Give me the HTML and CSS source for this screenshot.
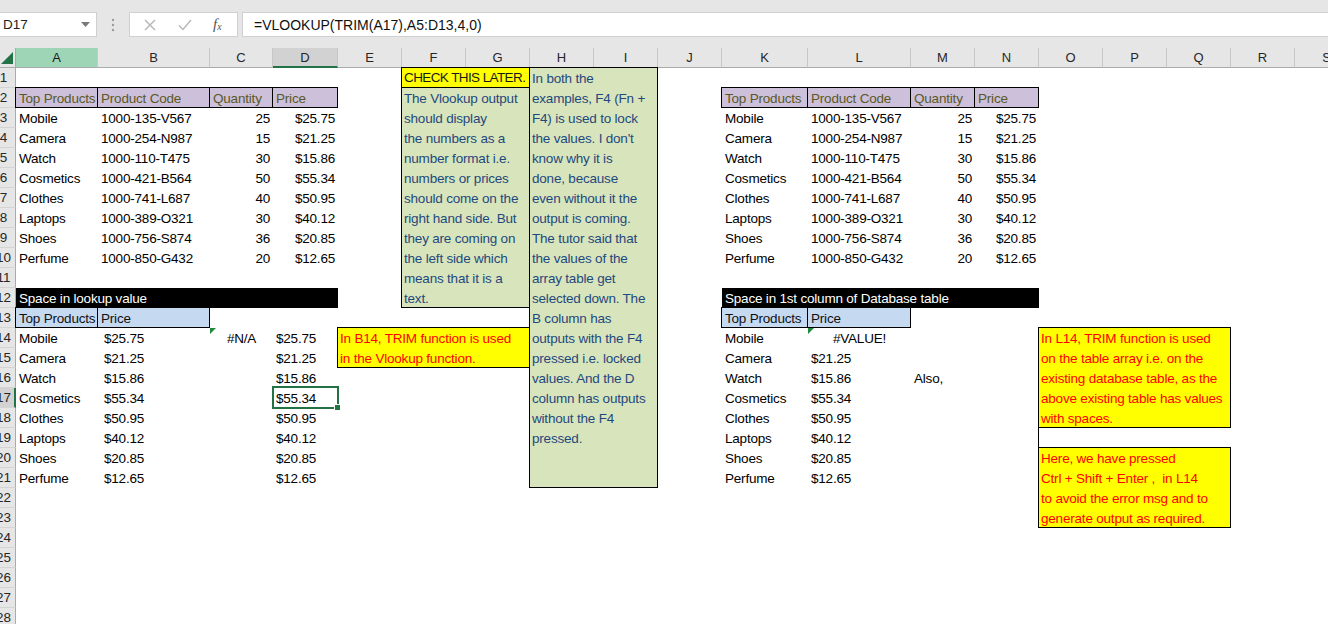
FILE: index.html
```html
<!DOCTYPE html>
<html>
<head>
<meta charset="utf-8">
<link rel="stylesheet" href="styles.css">
</head>
<body>
<div class="app">
  <div class="fbar">
    <div class="namebox">
      <span>D17</span>
      <svg class="dd" width="9" height="5" viewBox="0 0 9 5"><path d="M0 0H9L4.5 5Z" fill="#7a7a7a"/></svg>
    </div>
    <svg class="dots" width="4" height="14" viewBox="0 0 4 14"><circle cx="2" cy="2" r="1.2" fill="#9a9a9a"/><circle cx="2" cy="7" r="1.2" fill="#9a9a9a"/><circle cx="2" cy="12" r="1.2" fill="#9a9a9a"/></svg>
    <div class="btns">
      <svg width="12" height="12" viewBox="0 0 12 12"><path d="M1 1L11 11M11 1L1 11" stroke="#b9b9b9" stroke-width="1.5"/></svg>
      <svg width="14" height="12" viewBox="0 0 14 12"><path d="M1 6.5L5 10.5L13 1" stroke="#b9b9b9" stroke-width="1.5" fill="none"/></svg>
      <span class="fx">f<sub>x</sub></span>
    </div>
    <div class="formula">=VLOOKUP(TRIM(A17),A5:D13,4,0)</div>
  </div>

  <div class="sheet">
    <div class="corner"><svg width="12" height="12" viewBox="0 0 12 12"><path d="M12 0V12H0Z" fill="#217346"/></svg></div>
    <div class="ch cA sel-a">A</div><div class="ch cB">B</div><div class="ch cC">C</div><div class="ch cD sel-d">D</div>
    <div class="ch cE">E</div><div class="ch cF">F</div><div class="ch cG">G</div><div class="ch cH">H</div>
    <div class="ch cI">I</div><div class="ch cJ">J</div><div class="ch cK">K</div><div class="ch cL">L</div>
    <div class="ch cM">M</div><div class="ch cN">N</div><div class="ch cO">O</div><div class="ch cP">P</div>
    <div class="ch cQ">Q</div><div class="ch cR">R</div><div class="ch cS">S</div>

    <div class="rh r1"><span>1</span></div><div class="rh r2"><span>2</span></div><div class="rh r3"><span>3</span></div>
    <div class="rh r4"><span>4</span></div><div class="rh r5"><span>5</span></div><div class="rh r6"><span>6</span></div>
    <div class="rh r7"><span>7</span></div><div class="rh r8"><span>8</span></div><div class="rh r9"><span>9</span></div>
    <div class="rh r10"><span>10</span></div><div class="rh r11"><span>11</span></div><div class="rh r12"><span>12</span></div>
    <div class="rh r13"><span>13</span></div><div class="rh r14"><span>14</span></div><div class="rh r15"><span>15</span></div>
    <div class="rh r16"><span>16</span></div><div class="rh r17 sel-r"><span>17</span></div><div class="rh r18"><span>18</span></div>
    <div class="rh r19"><span>19</span></div><div class="rh r20"><span>20</span></div><div class="rh r21"><span>21</span></div>
    <div class="rh r22"><span>22</span></div><div class="rh r23"><span>23</span></div><div class="rh r24"><span>24</span></div>
    <div class="rh r25"><span>25</span></div><div class="rh r26"><span>26</span></div><div class="rh r27"><span>27</span></div>
    <div class="rh r28"><span>28</span></div>

    <!-- Left table -->
    <div class="c hd cA r2 clip">Top Products</div><div class="c hd cB r2">Product Code</div><div class="c hd cC r2">Quantity</div><div class="c hd cD r2">Price</div>
    <div class="c cA r3">Mobile</div><div class="c cB r3">1000-135-V567</div><div class="c cC r3 rt">25</div><div class="c cD r3 rt">$25.75</div>
    <div class="c cA r4">Camera</div><div class="c cB r4">1000-254-N987</div><div class="c cC r4 rt">15</div><div class="c cD r4 rt">$21.25</div>
    <div class="c cA r5">Watch</div><div class="c cB r5">1000-110-T475</div><div class="c cC r5 rt">30</div><div class="c cD r5 rt">$15.86</div>
    <div class="c cA r6">Cosmetics</div><div class="c cB r6">1000-421-B564</div><div class="c cC r6 rt">50</div><div class="c cD r6 rt">$55.34</div>
    <div class="c cA r7">Clothes</div><div class="c cB r7">1000-741-L687</div><div class="c cC r7 rt">40</div><div class="c cD r7 rt">$50.95</div>
    <div class="c cA r8">Laptops</div><div class="c cB r8">1000-389-O321</div><div class="c cC r8 rt">30</div><div class="c cD r8 rt">$40.12</div>
    <div class="c cA r9">Shoes</div><div class="c cB r9">1000-756-S874</div><div class="c cC r9 rt">36</div><div class="c cD r9 rt">$20.85</div>
    <div class="c cA r10">Perfume</div><div class="c cB r10">1000-850-G432</div><div class="c cC r10 rt">20</div><div class="c cD r10 rt">$12.65</div>

    <div class="c band bandL r12">Space in lookup value</div>
    <div class="c hb cA r13 clip">Top Products</div><div class="c hb cB r13">Price</div>

    <div class="c cA r14">Mobile</div><div class="c cB r14 pr">$25.75</div><div class="c cC r14 ct err">#N/A</div><div class="c cD r14">$25.75</div>
    <div class="c cA r15">Camera</div><div class="c cB r15 pr">$21.25</div><div class="c cD r15">$21.25</div>
    <div class="c cA r16">Watch</div><div class="c cB r16 pr">$15.86</div><div class="c cD r16">$15.86</div>
    <div class="c cA r17">Cosmetics</div><div class="c cB r17 pr">$55.34</div><div class="c cD r17">$55.34</div>
    <div class="c cA r18">Clothes</div><div class="c cB r18 pr">$50.95</div><div class="c cD r18">$50.95</div>
    <div class="c cA r19">Laptops</div><div class="c cB r19 pr">$40.12</div><div class="c cD r19">$40.12</div>
    <div class="c cA r20">Shoes</div><div class="c cB r20 pr">$20.85</div><div class="c cD r20">$20.85</div>
    <div class="c cA r21">Perfume</div><div class="c cB r21 pr">$12.65</div><div class="c cD r21">$12.65</div>

    <div class="selbox cD r17"></div>

    <!-- Notes middle -->
    <div class="box yel noteF1">CHECK THIS LATER.</div>
    <div class="box grn noteF2">The Vlookup output<br>should display<br>the numbers as a<br>number format i.e.<br>numbers or prices<br>should come on the<br>right hand side. But<br>they are coming on<br>the left side which<br>means that it is a<br>text.</div>
    <div class="box grn noteH">In both the<br>examples, F4 (Fn +<br>F4) is used to lock<br>the values. I don't<br>know why it is<br>done, because<br>even without it the<br>output is coming.<br>The tutor said that<br>the values of the<br>array table get<br>selected down. The<br>B column has<br>outputs with the F4<br>pressed i.e. locked<br>values. And the D<br>column has outputs<br>without the F4<br>pressed.</div>
    <div class="box red noteE">In B14, TRIM function is used<br>in the Vlookup function.</div>

    <!-- Right table -->
    <div class="c hd cK r2 clip">Top Products</div><div class="c hd cL r2">Product Code</div><div class="c hd cM r2">Quantity</div><div class="c hd cN r2">Price</div>
    <div class="c cK r3">Mobile</div><div class="c cL r3">1000-135-V567</div><div class="c cM r3 rt">25</div><div class="c cN r3 rt">$25.75</div>
    <div class="c cK r4">Camera</div><div class="c cL r4">1000-254-N987</div><div class="c cM r4 rt">15</div><div class="c cN r4 rt">$21.25</div>
    <div class="c cK r5">Watch</div><div class="c cL r5">1000-110-T475</div><div class="c cM r5 rt">30</div><div class="c cN r5 rt">$15.86</div>
    <div class="c cK r6">Cosmetics</div><div class="c cL r6">1000-421-B564</div><div class="c cM r6 rt">50</div><div class="c cN r6 rt">$55.34</div>
    <div class="c cK r7">Clothes</div><div class="c cL r7">1000-741-L687</div><div class="c cM r7 rt">40</div><div class="c cN r7 rt">$50.95</div>
    <div class="c cK r8">Laptops</div><div class="c cL r8">1000-389-O321</div><div class="c cM r8 rt">30</div><div class="c cN r8 rt">$40.12</div>
    <div class="c cK r9">Shoes</div><div class="c cL r9">1000-756-S874</div><div class="c cM r9 rt">36</div><div class="c cN r9 rt">$20.85</div>
    <div class="c cK r10">Perfume</div><div class="c cL r10">1000-850-G432</div><div class="c cM r10 rt">20</div><div class="c cN r10 rt">$12.65</div>

    <div class="c band bandK r12">Space in 1st column of Database table</div>
    <div class="c hb cK r13 clip">Top Products</div><div class="c hb cL r13">Price</div>

    <div class="c cK r14">Mobile</div><div class="c cL r14 ct err">#VALUE!</div>
    <div class="c cK r15">Camera</div><div class="c cL r15">$21.25</div>
    <div class="c cK r16">Watch</div><div class="c cL r16">$15.86</div><div class="c cM r16">Also,</div>
    <div class="c cK r17">Cosmetics</div><div class="c cL r17">$55.34</div>
    <div class="c cK r18">Clothes</div><div class="c cL r18">$50.95</div>
    <div class="c cK r19">Laptops</div><div class="c cL r19">$40.12</div>
    <div class="c cK r20">Shoes</div><div class="c cL r20">$20.85</div>
    <div class="c cK r21">Perfume</div><div class="c cL r21">$12.65</div>

    <div class="box red noteO1">In L14, TRIM function is used<br>on the table array i.e. on the<br>existing database table, as the<br>above existing table has values<br>with spaces.</div>
    <div class="lineO cO r19"></div>
    <div class="box red noteO2">Here, we have pressed<br>Ctrl + Shift + Enter ,&nbsp; in L14<br>to avoid the error msg and to<br>generate output as required.</div>
  </div>
</div>
</body>
</html>
```

FILE: styles.css
```css
html, body {
  margin: 0;
  padding: 0;
  background: #ffffff;
  overflow: hidden;
}
body {
  font-family: "Liberation Sans", Arial, sans-serif;
  font-size: 13.5px;
  letter-spacing: -0.2px;
  color: #000;
  width: 1328px;
  height: 624px;
}
.app {
  display: flex;
  flex-direction: column;
  width: 1328px;
  height: 624px;
  overflow: hidden;
}

/* formula bar */
.fbar {
  height: 48px;
  box-sizing: border-box;
  padding: 12px 0 11px 0;
  background: #e6e6e6;
  display: flex;
  align-items: stretch;
  flex: none;
  letter-spacing: 0;
}
.namebox {
  width: 97px;
  box-sizing: border-box;
  background: #fff;
  border: 1px solid #d0d0d0;
  border-left: none;
  display: flex;
  align-items: center;
  justify-content: space-between;
  padding: 0 6px 0 3px;
  font-size: 13.5px;
  color: #222;
}
.dots {
  align-self: center;
  margin: 0 14px 0 14px;
}
.btns {
  width: 109px;
  box-sizing: border-box;
  background: #fff;
  border: 1px solid #d0d0d0;
  display: flex;
  align-items: center;
  padding: 0 0 0 14px;
}
.btns svg:first-child { margin-right: 22px; }
.btns svg:nth-child(2) { margin-right: 21px; }
.fx {
  font-family: "Liberation Serif", serif;
  font-style: italic;
  font-size: 15px;
  color: #555;
  line-height: 1;
}
.fx sub {
  font-size: 10px;
  vertical-align: -1px;
}
.formula {
  flex: 1;
  margin-left: 4px;
  background: #fff;
  border: 1px solid #d0d0d0;
  border-right: none;
  display: flex;
  align-items: center;
  padding-left: 11px;
  font-size: 14px;
  color: #111;
}

/* sheet grid */
.sheet {
  display: grid;
  grid-template-columns: 16px 82px 112px 63px 65px 64px 64px 64px 64px 64px 64px 86px 103px 64px 64px 64px 64px 64px 64px 64px;
  grid-template-rows: repeat(29, 20px);
  flex: none;
  background: #fff;
}
.corner {
  grid-column: 1;
  grid-row: 1;
  background: #e6e6e6;
  border-right: 1px solid #ababab;
  border-bottom: 1px solid #ababab;
  display: flex;
  align-items: flex-end;
  justify-content: flex-end;
  padding: 0 2px 3px 0;
}
.ch {
  grid-row: 1;
  background: #e6e6e6;
  border-right: 1px solid #c6c6c6;
  border-bottom: 1px solid #ababab;
  text-align: center;
  line-height: 20px;
  font-size: 13px;
  letter-spacing: 0;
  color: #262626;
}
.ch.sel-a { background: #9fd5b7; color: #1a1a1a; }
.ch.sel-d { background: #d2d2d2; border-bottom: 2px solid #217346; line-height: 19px; }
.rh {
  grid-column: 1;
  background: #e6e6e6;
  border-right: 1px solid #ababab;
  border-bottom: 1px solid #d4d4d4;
  overflow: hidden;
  line-height: 20px;
  font-size: 13.5px;
  letter-spacing: 0;
  color: #262626;
}
.rh span {
  display: block;
  width: 25px;
  margin-left: -9px;
  text-align: center;
}
.rh.sel-r { background: #d2d2d2; border-right: 2px solid #217346; }

/* columns */
.cA { grid-column: 2; }
.cB { grid-column: 3; }
.cC { grid-column: 4; }
.cD { grid-column: 5; }
.cE { grid-column: 6; }
.cF { grid-column: 7; }
.cG { grid-column: 8; }
.cH { grid-column: 9; }
.cI { grid-column: 10; }
.cJ { grid-column: 11; }
.cK { grid-column: 12; }
.cL { grid-column: 13; }
.cM { grid-column: 14; }
.cN { grid-column: 15; }
.cO { grid-column: 16; }
.cP { grid-column: 17; }
.cQ { grid-column: 18; }
.cR { grid-column: 19; }
.cS { grid-column: 20; }

/* rows */
.r1 { grid-row: 2; } .r2 { grid-row: 3; } .r3 { grid-row: 4; } .r4 { grid-row: 5; }
.r5 { grid-row: 6; } .r6 { grid-row: 7; } .r7 { grid-row: 8; } .r8 { grid-row: 9; }
.r9 { grid-row: 10; } .r10 { grid-row: 11; } .r11 { grid-row: 12; } .r12 { grid-row: 13; }
.r13 { grid-row: 14; } .r14 { grid-row: 15; } .r15 { grid-row: 16; } .r16 { grid-row: 17; }
.r17 { grid-row: 18; } .r18 { grid-row: 19; } .r19 { grid-row: 20; } .r20 { grid-row: 21; }
.r21 { grid-row: 22; } .r22 { grid-row: 23; } .r23 { grid-row: 24; } .r24 { grid-row: 25; }
.r25 { grid-row: 26; } .r26 { grid-row: 27; } .r27 { grid-row: 28; } .r28 { grid-row: 29; }

/* cells */
.c {
  line-height: 20px;
  padding: 1px 3px 0 3px;
  white-space: nowrap;
  position: relative;
  min-width: 0;
}
.clip { overflow: hidden; }
.rt { text-align: right; }
.ct { text-align: center; }
.pr { padding-left: 6px; }
.hd {
  background: #ccc0da;
  color: #5a5826;
  border: 1px solid #000;
  margin: -1px 0 0 -1px;
  line-height: 19px;
  padding: 1px 0 0 3px;
}
.hb {
  background: #c5d9f1;
  color: #111;
  border: 1px solid #000;
  margin: -1px 0 0 -1px;
  line-height: 19px;
  padding: 1px 0 0 3px;
}
.band {
  background: #000;
  color: #fff;
}
.bandL { grid-column: 2 / 6; }
.bandK { grid-column: 12 / 16; }
.err::before {
  content: "";
  position: absolute;
  left: 0;
  top: 0;
  border-top: 6px solid #1e8a3a;
  border-right: 6px solid transparent;
}

.selbox {
  border: 2px solid #217346;
  margin: -2px -1px -1px -1px;
  position: relative;
}
.selbox::after {
  content: "";
  position: absolute;
  right: -4px;
  bottom: -4px;
  width: 5px;
  height: 5px;
  background: #217346;
  border: 1px solid #fff;
}

/* note boxes */
.box {
  border: 1px solid #000;
  margin: -1px 0 0 -1px;
  padding: 1px 2px 0 2px;
  line-height: 20px;
  white-space: nowrap;
  overflow: hidden;
  min-width: 0;
}
.yel { background: #ffff00; color: #1a1a1a; }
.grn { background: #d8e4bc; color: #1f497d; }
.red { background: #ffff00; color: #ff0000; }
.noteF1 { grid-column: 7 / 9; grid-row: 2; line-height: 19px; letter-spacing: -0.6px; padding-top: 0; }
.noteF2 { grid-column: 7 / 9; grid-row: 3 / 14; }
.noteH { grid-column: 9 / 11; grid-row: 2 / 23; }
.noteE { grid-column: 6 / 9; grid-row: 15 / 17; }
.noteO1 { grid-column: 16 / 19; grid-row: 15 / 20; }
.noteO2 { grid-column: 16 / 19; grid-row: 21 / 25; }
.lineO {
  border-left: 1px solid #000;
  margin-left: -1px;
}
```
